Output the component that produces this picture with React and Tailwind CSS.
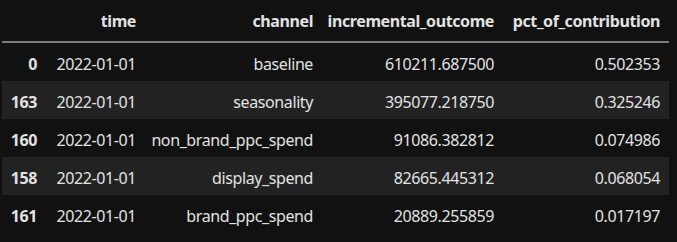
const columns = ["", "time", "channel", "incremental_outcome", "pct_of_contribution"];

const rows = [
  ["0", "2022-01-01", "baseline", "610211.687500", "0.502353"],
  ["163", "2022-01-01", "seasonality", "395077.218750", "0.325246"],
  ["160", "2022-01-01", "non_brand_ppc_spend", "91086.382812", "0.074986"],
  ["158", "2022-01-01", "display_spend", "82665.445312", "0.068054"],
  ["161", "2022-01-01", "brand_ppc_spend", "20889.255859", "0.017197"],
];

const grid = "grid grid-cols-[44px_99px_177px_181px_166px]";

export default function App() {
  return (
    <div className="w-[677px] h-[242px] bg-[#111111] text-[#e2e2e2] font-['Noto_Sans',sans-serif] text-[16px] tracking-[-0.4px] overflow-hidden">
      <div className="ml-[2px] w-[667px]">
        <div className={`${grid} h-[43px] items-start border-b-2 border-[#7c7c7c] font-bold`}>
          {columns.map((c, i) => (
            <div key={i} className="flex justify-end px-[9px] pt-[13px] leading-none whitespace-nowrap">
              {c}
            </div>
          ))}
        </div>
        {rows.map((r, i) => (
          <div
            key={i}
            className={`${grid} h-[38px] items-start ${i % 2 === 1 ? "bg-[#222222]" : ""}`}
          >
            {r.map((v, j) => (
              <div
                key={j}
                className={`flex justify-end px-[9px] pt-[13px] leading-none whitespace-nowrap ${j === 0 ? "font-bold" : ""}`}
              >
                {v}
              </div>
            ))}
          </div>
        ))}
      </div>
    </div>
  );
}
